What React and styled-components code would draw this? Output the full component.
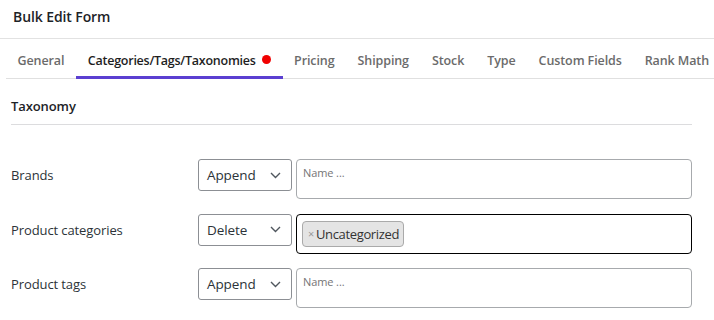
import React from "react";
import styled, { createGlobalStyle } from "styled-components";

const Global = createGlobalStyle`
  html, body { margin: 0; padding: 0; background: #fff; }
  body { font-family: "Open Sans", "Noto Sans", sans-serif; color: #1e1e1e; }
  * { box-sizing: border-box; }
`;

const Page = styled.div`
  width: 714px;
  height: 320px;
  overflow: hidden;
  background: #fff;
`;

const Header = styled.div`
  height: 39px;
  display: flex;
  align-items: center;
  padding: 0 13px 5px;
  border-bottom: 1px solid #e2e2e2;
`;

const Title = styled.h1`
  margin: 0;
  font-size: 14px;
  font-weight: 600;
  color: #1d2327;
  letter-spacing: -0.1px;
`;

const Tabs = styled.nav`
  margin-left: 6px;
  display: flex;
  height: 40px;
  border-bottom: 1px solid #e0e0e0;
`;

const Tab = styled.div`
  position: relative;
  display: flex;
  align-items: center;
  gap: 6px;
  padding: 4px ${(p) => (p.$active ? 12 : 11.5)}px 0;
  font-size: 12.5px;
  font-weight: 600;
  letter-spacing: ${(p) => (p.$active ? -0.25 : -0.1)}px;
  color: ${(p) => (p.$active ? "#1e1e1e" : "#6b6b6b")};
  white-space: nowrap;
  &::after {
    content: "";
    display: ${(p) => (p.$active ? "block" : "none")};
    position: absolute;
    left: 0;
    right: 0;
    bottom: -1px;
    height: 3px;
    background: #5b3fd1;
  }
`;

const Dot = styled.span`
  width: 9px;
  height: 9px;
  border-radius: 50%;
  background: #f00000;
  margin-top: -3px;
`;

const Section = styled.section`
  padding: 0 22px 0 11px;
`;

const SectionTitle = styled.h2`
  margin: 0;
  height: 46px;
  display: flex;
  align-items: center;
  padding-top: 8px;
  font-size: 13px;
  font-weight: 600;
  color: #1d2327;
  letter-spacing: -0.1px;
  border-bottom: 1px solid #dcdcde;
`;

const Rows = styled.div`
  padding-top: 34px;
  display: flex;
  flex-direction: column;
  gap: 14.5px;
`;

const Row = styled.div`
  display: flex;
  align-items: flex-start;
`;

const Label = styled.div`
  width: 187px;
  height: 32px;
  display: flex;
  align-items: center;
  font-size: 13px;
  color: #2c3338;
  letter-spacing: -0.1px;
`;

const Select = styled.div`
  width: 94px;
  height: 32px;
  border: 1px solid #8c8f94;
  border-radius: 3px;
  display: flex;
  align-items: center;
  justify-content: space-between;
  padding: 0 10px 0 8px;
  font-size: 13.5px;
  color: #2c3338;
  letter-spacing: -0.1px;
  margin-right: 4px;
`;

const Field = styled.div`
  flex: 1;
  height: 40px;
  border: 1px solid ${(p) => (p.$focus ? "#000" : "#a7aaad")};
  border-radius: 4px;
  display: flex;
  align-items: ${(p) => (p.$focus ? "center" : "flex-start")};
  padding: ${(p) => (p.$focus ? "0 5px" : "5px 6px")};
`;

const Placeholder = styled.span`
  font-size: 11px;
  color: #757575;
  letter-spacing: -0.1px;
`;

const Chip = styled.span`
  display: inline-flex;
  align-items: center;
  gap: 2px;
  height: 26px;
  padding: 0 4px 0 5px;
  background: #e4e4e4;
  border: 1px solid #aaa;
  border-radius: 4px;
  font-size: 13px;
  color: #333;
  letter-spacing: -0.35px;
`;

const Remove = styled.span`
  color: #999;
  font-size: 11px;
`;

const Chevron = () => (
  <svg width="11" height="7" viewBox="0 0 11 7" fill="none">
    <path d="M1 1l4.5 4.5L10 1" stroke="#50575e" strokeWidth="1.4" />
  </svg>
);

const tabs = [
  "General",
  "Categories/Tags/Taxonomies",
  "Pricing",
  "Shipping",
  "Stock",
  "Type",
  "Custom Fields",
  "Rank Math",
];

export default function App() {
  return (
    <Page>
      <Global />
      <Header>
        <Title>Bulk Edit Form</Title>
      </Header>
      <Tabs>
        {tabs.map((t, i) => (
          <Tab key={t} $active={i === 1}>
            {t}
            {i === 1 && <Dot />}
          </Tab>
        ))}
      </Tabs>
      <Section>
        <SectionTitle>Taxonomy</SectionTitle>
        <Rows>
          <Row>
            <Label>Brands</Label>
            <Select>
              Append
              <Chevron />
            </Select>
            <Field>
              <Placeholder>Name ...</Placeholder>
            </Field>
          </Row>
          <Row>
            <Label>Product categories</Label>
            <Select>
              Delete
              <Chevron />
            </Select>
            <Field $focus>
              <Chip>
                <Remove>×</Remove>
                Uncategorized
              </Chip>
            </Field>
          </Row>
          <Row>
            <Label>Product tags</Label>
            <Select>
              Append
              <Chevron />
            </Select>
            <Field>
              <Placeholder>Name ...</Placeholder>
            </Field>
          </Row>
        </Rows>
      </Section>
    </Page>
  );
}
